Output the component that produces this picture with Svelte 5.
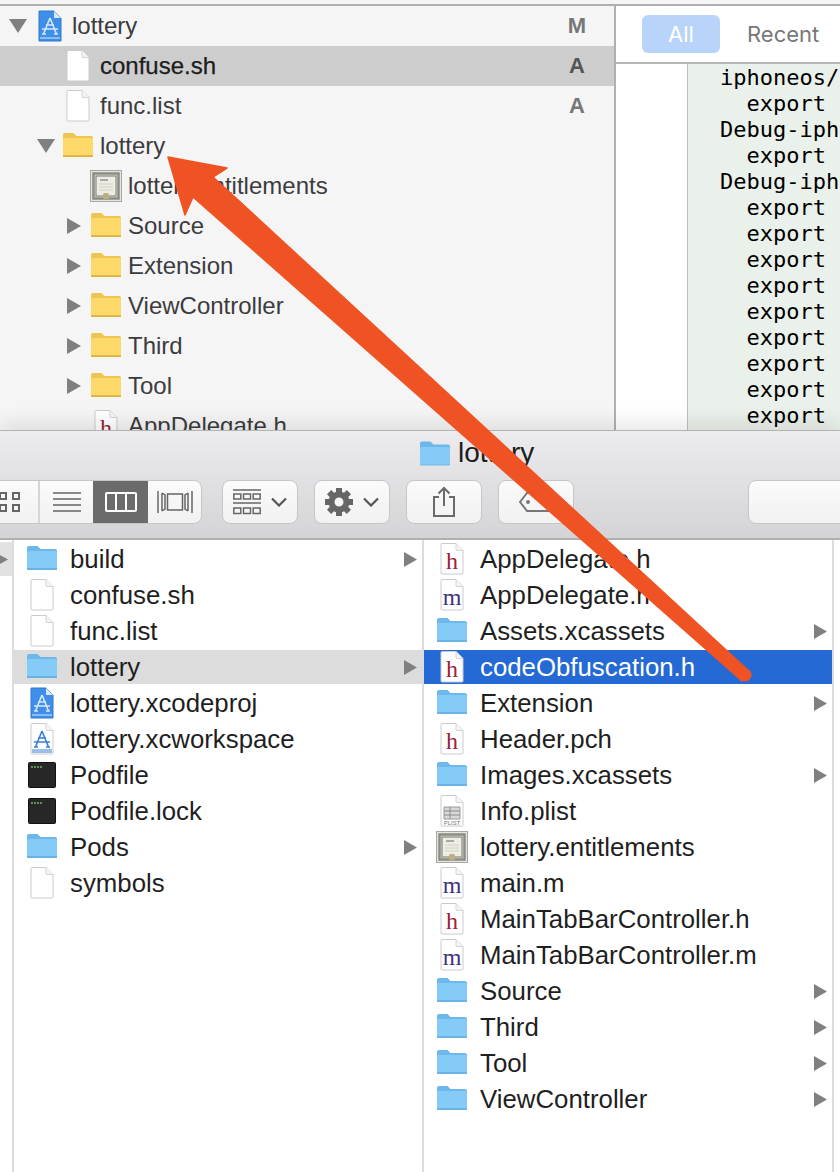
<script>
  const tree = [
    { d: 0, tw: 'down', icon: 'proj', name: 'lottery', st: 'M' },
    { d: 1, icon: 'doc', name: 'confuse.sh', st: 'A', sel: true },
    { d: 1, icon: 'doc', name: 'func.list', st: 'A' },
    { d: 1, tw: 'down', icon: 'yfolder', name: 'lottery' },
    { d: 2, icon: 'cert', name: 'lottery.entitlements' },
    { d: 2, tw: 'right', icon: 'yfolder', name: 'Source' },
    { d: 2, tw: 'right', icon: 'yfolder', name: 'Extension' },
    { d: 2, tw: 'right', icon: 'yfolder', name: 'ViewController' },
    { d: 2, tw: 'right', icon: 'yfolder', name: 'Third' },
    { d: 2, tw: 'right', icon: 'yfolder', name: 'Tool' },
    { d: 2, icon: 'h', name: 'AppDelegate.h' }
  ];
  const code = ['iphoneos/', '  export', 'Debug-iph', '  export', 'Debug-iph', '  export', '  export', '  export', '  export', '  export', '  export', '  export', '  export', '  export'];
  const col1 = [
    { icon: 'folder', name: 'build', more: true },
    { icon: 'doc', name: 'confuse.sh' },
    { icon: 'doc', name: 'func.list' },
    { icon: 'folder', name: 'lottery', more: true, sel: 'grey' },
    { icon: 'proj', name: 'lottery.xcodeproj' },
    { icon: 'work', name: 'lottery.xcworkspace' },
    { icon: 'term', name: 'Podfile' },
    { icon: 'term', name: 'Podfile.lock' },
    { icon: 'folder', name: 'Pods', more: true },
    { icon: 'doc', name: 'symbols' }
  ];
  const col2 = [
    { icon: 'h', name: 'AppDelegate.h' },
    { icon: 'm', name: 'AppDelegate.m' },
    { icon: 'folder', name: 'Assets.xcassets', more: true },
    { icon: 'h', name: 'codeObfuscation.h', sel: 'blue' },
    { icon: 'folder', name: 'Extension', more: true },
    { icon: 'h', name: 'Header.pch' },
    { icon: 'folder', name: 'Images.xcassets', more: true },
    { icon: 'plist', name: 'Info.plist' },
    { icon: 'cert', name: 'lottery.entitlements' },
    { icon: 'm', name: 'main.m' },
    { icon: 'h', name: 'MainTabBarController.h' },
    { icon: 'm', name: 'MainTabBarController.m' },
    { icon: 'folder', name: 'Source', more: true },
    { icon: 'folder', name: 'Third', more: true },
    { icon: 'folder', name: 'Tool', more: true },
    { icon: 'folder', name: 'ViewController', more: true }
  ];
  const teeth = [0, 45, 90, 135, 180, 225, 270, 315];
</script>

{#snippet docBase(fill = '#fff')}
  <path d="M6 1.500h14l7 7V31a1 1 0 0 1-1 1H6a1 1 0 0 1-1-1V2.500a1 1 0 0 1 1-1z" fill={fill} stroke="#cbcbcb" stroke-width="1" />
  <path d="M20 1.500v6a1 1 0 0 0 1 1h6" fill="#f4f4f4" stroke="#d4d4d4" stroke-width="1" />
{/snippet}

{#snippet xA(color)}
  <path d="M16 9 9.500 25M16 9l6.500 16M8 20h16M12 16h8" fill="none" stroke={color} stroke-width="1.600" />
  <path d="M8 25h4M20 25h4" stroke={color} stroke-width="1.600" />
{/snippet}

{#snippet icon(kind)}
  <svg class="ic" viewBox="0 0 32 34" width="32" height="34" aria-hidden="true">
    {#if kind === 'folder' || kind === 'yfolder'}
      {@const y = kind === 'yfolder'}
      <g transform="translate(0 -1.500)">
        <path d="M1 8V7.500A2 2 0 0 1 3 5.500h8.500l3 3H29a2 2 0 0 1 2 2V28a1.500 1.500 0 0 1-1.500 1.500h-27A1.500 1.500 0 0 1 1 28z" fill={y ? '#eec552' : '#6cb8ec'} />
        <path d="M1 12A1.500 1.500 0 0 1 2.500 10.500h27A1.500 1.500 0 0 1 31 12V27a1.500 1.500 0 0 1-1.500 1.500h-27A1.500 1.500 0 0 1 1 27z" fill={y ? '#fcd968' : '#85cbf8'} />
        <path d="M1 28.500h30" stroke={y ? '#dcae3a' : '#62ace2'} stroke-width="1.500" />
      </g>
    {:else if kind === 'doc'}
      {@render docBase()}
    {:else if kind === 'h' || kind === 'm'}
      {@render docBase()}
      <text x="16" y="27" text-anchor="middle" class={kind === 'h' ? 'glyph-h' : 'glyph-m'}>{kind}</text>
    {:else if kind === 'proj'}
      <path d="M5 2h15l7 7v23H5z" fill="#3f8fe8" stroke="#2f78cf" stroke-width="1" />
      <path d="M20 2v7h7z" fill="#d8e8fa" />
      {@render xA('#d5e7fb')}
      <path d="M6 29h20" stroke="#d5e7fb" stroke-width="1" />
    {:else if kind === 'work'}
      {@render docBase()}
      {@render xA('#3a7fd0')}
      <path d="M6 28h20M6 30h20" stroke="#3a7fd0" stroke-width="1" />
    {:else if kind === 'term'}
      <rect x="2.500" y="4.500" width="27" height="25" rx="1" fill="#272727" stroke="#111" stroke-width="1" />
      <path d="M5 9h2M8 9h2M11 9h2M14 9h2" stroke="#6fb46a" stroke-width="1.500" />
    {:else if kind === 'plist'}
      {@render docBase()}
      <path d="M8 13h16v12H8z" fill="#d8d8d8" stroke="#9a9a9a" stroke-width="1" />
      <path d="M8 17h16M8 21h16M14 13v12" stroke="#8a8a8a" stroke-width="1" />
      <text x="16" y="31" text-anchor="middle" class="glyph-p">PLIST</text>
    {:else if kind === 'cert'}
      <rect x="0.500" y="1.500" width="31" height="31" fill="#e6e5dc" stroke="#a8a8a8" />
      <rect x="3.500" y="4.500" width="25" height="25" fill="none" stroke="#8c8c86" stroke-width="2.500" />
      <rect x="6" y="7" width="20" height="20" fill="#eeede4" stroke="#77776f" stroke-width="1" />
      <path d="M10 11h8" stroke="#666" stroke-width="1" />
      <path d="M9 15h14M9 18h14M9 21h14" stroke="#cfcec4" stroke-width="1" />
      <rect x="13" y="24" width="6" height="6" rx="1.500" fill="#bcae86" />
    {/if}
  </svg>
{/snippet}

{#snippet column(rows)}
  {#each rows as r}
    <div class="crow {r.sel ?? ''}">
      {@render icon(r.icon)}
      <span class="cname">{r.name}</span>
      {#if r.more}
        <svg class="more" viewBox="0 0 13 15" width="13" height="15" aria-hidden="true"><path d="M0 0l13 7.500L0 15z" /></svg>
      {/if}
    </div>
  {/each}
{/snippet}

<div class="page">
  <section class="top">
    <div class="sidebar">
      {#each tree as t}
        <div class="trow" class:tsel={t.sel} style="padding-left: {6 + 28 * t.d}px">
          <span class="twisty">
            {#if t.tw === 'down'}
              <svg viewBox="0 0 18 14" width="18" height="14" aria-hidden="true"><path d="M0 0h18L9 14z" /></svg>
            {:else if t.tw === 'right'}
              <svg viewBox="0 0 14 16" width="14" height="16" aria-hidden="true"><path d="M0 0l14 8L0 16z" /></svg>
            {/if}
          </span>
          {@render icon(t.icon)}
          <span class="tname">{t.name}</span>
          {#if t.st}<span class="status">{t.st}</span>{/if}
        </div>
      {/each}
    </div>
    <div class="detail">
      <div class="tabs">
        <span class="tab on">All</span>
        <span class="tab">Recent</span>
      </div>
      <div class="codewrap">
        <div class="gutter"></div>
        <pre class="code">{code.join('\n')}</pre>
      </div>
    </div>
  </section>

  <section class="finder">
    <header class="chrome">
      <div class="title">
        <svg class="ic" viewBox="0 0 32 34" width="32" height="34" aria-hidden="true">
          <path d="M1 8V7.500A2 2 0 0 1 3 5.500h8.500l3 3H29a2 2 0 0 1 2 2V28a1.500 1.500 0 0 1-1.500 1.500h-27A1.500 1.500 0 0 1 1 28z" fill="#6cb8ec" />
          <path d="M1 12.500A1.500 1.500 0 0 1 2.500 11h27a1.500 1.500 0 0 1 1.500 1.500V27a1.500 1.500 0 0 1-1.500 1.500h-27A1.500 1.500 0 0 1 1 27z" fill="#85cbf8" />
        </svg>
        <span>lottery</span>
      </div>
      <div class="toolbar">
        <div class="seg">
          <div class="sb grid">
            <svg viewBox="0 0 20 20" width="20" height="20" fill="none" stroke="#666" stroke-width="2" aria-hidden="true">
              <rect x="0" y="1" width="6" height="6" /><rect x="13" y="1" width="6" height="6" />
              <rect x="0" y="13" width="6" height="6" /><rect x="13" y="13" width="6" height="6" />
            </svg>
          </div>
          <div class="sb list">
            <svg viewBox="0 0 28 20" width="28" height="20" stroke="#666" stroke-width="1.500" aria-hidden="true"><path d="M0 1h28M0 7h28M0 13h28M0 19h28" /></svg>
          </div>
          <div class="sb cols">
            <svg viewBox="0 0 32 20" width="32" height="20" fill="none" stroke="#fff" stroke-width="2" aria-hidden="true"><rect x="1" y="1" width="30" height="18" rx="1" /><path d="M11 1v18M21 1v18" /></svg>
          </div>
          <div class="sb flow">
            <svg viewBox="0 0 36 24" width="36" height="24" fill="none" stroke="#666" stroke-width="1.500" aria-hidden="true"><rect x="10.500" y="4" width="15" height="16" /><path d="M1 1v22M5 3v18M31 3v18M35 1v22M5 3l3 2v14l-3 2M31 3l-3 2v14l3 2" /></svg>
          </div>
        </div>
        <div class="btn arrange">
          <svg viewBox="0 0 28 26" width="28" height="26" fill="none" stroke="#666" stroke-width="1.500" aria-hidden="true">
            <path d="M0 1h28M0 14h28" />
            <rect x="0.800" y="5" width="7" height="5" /><rect x="10.500" y="5" width="7" height="5" /><rect x="20.200" y="5" width="7" height="5" />
            <rect x="0.800" y="19" width="7" height="5.500" /><rect x="10.500" y="19" width="7" height="5.500" /><rect x="20.200" y="19" width="7" height="5.500" />
          </svg>
          <svg class="chev" viewBox="0 0 16 10" width="16" height="10" fill="none" stroke="#555" stroke-width="2.200" aria-hidden="true"><path d="M1 1.500l7 7 7-7" /></svg>
        </div>
        <div class="btn action">
          <svg viewBox="0 0 28 28" width="28" height="28" aria-hidden="true">
            {#each teeth as a}
              <rect x="11" y="0" width="6" height="7" fill="#666" transform="rotate({a} 14 14)" />
            {/each}
            <circle cx="14" cy="14" r="7.500" fill="none" stroke="#666" stroke-width="6" />
          </svg>
          <svg class="chev" viewBox="0 0 16 10" width="16" height="10" fill="none" stroke="#555" stroke-width="2.200" aria-hidden="true"><path d="M1 1.500l7 7 7-7" /></svg>
        </div>
        <div class="btn share">
          <svg viewBox="0 0 24 32" width="24" height="32" fill="none" stroke="#6a6a6a" stroke-width="2" aria-hidden="true">
            <path d="M7 11H2v19h20V11h-5M12 20V2M6.500 7.500 12 2l5.500 5.500" />
          </svg>
        </div>
        <div class="btn tag">
          <svg viewBox="0 0 34 20" width="34" height="20" fill="none" stroke="#777" stroke-width="2" aria-hidden="true">
            <path d="M8 1h25v18H8L1 10z" /><circle cx="9" cy="10" r="1" fill="#777" />
          </svg>
        </div>
        <div class="btn search"></div>
      </div>
    </header>
    <div class="columns">
      <div class="strip">
        <div class="stripsel">
          <svg viewBox="0 0 8 15" width="8" height="15" aria-hidden="true"><path d="M-5 0 8 7.500-5 15z" fill="#808080" /></svg>
        </div>
      </div>
      <div class="col">{@render column(col1)}</div>
      <div class="col">{@render column(col2)}</div>
      <div class="rest"></div>
    </div>
  </section>

  <svg class="arrow" viewBox="0 0 840 1172" width="840" height="1172" aria-hidden="true">
    <path d="M168 157 227 168 213 177 750 672 742 681 193 197 185 215Z" fill="#f05323" stroke="#f05323" stroke-width="1.500" stroke-linejoin="round" />
    <circle cx="745" cy="675" r="6.500" fill="#f05323" />
  </svg>
</div>

<style>
  :global(body) {
    margin: 0;
    background: #fff;
  }
  .page {
    position: relative;
    width: 840px;
    height: 1172px;
    overflow: hidden;
    font-family: "Liberation Sans", Arial, sans-serif;
  }
  .top {
    display: flex;
    height: 430px;
    overflow: hidden;
    box-sizing: border-box;
    padding-top: 4px;
    background: #f5f5f5;
  }
  .sidebar {
    width: 614px;
    flex: none;
    border-top: 2px solid #b0b0b0;
    border-right: 2px solid #b0b0b0;
    background: #f5f5f5;
  }
  .trow {
    display: flex;
    align-items: center;
    height: 40px;
    box-sizing: border-box;
    font-size: 24px;
    color: #3c3c40;
  }
  .tsel {
    background: #cdcdcd;
    color: #1c1c1c;
  }
  .tsel .tname {
    -webkit-text-stroke: 0.25px #1c1c1c;
  }
  .twisty {
    flex: none;
    display: flex;
    justify-content: center;
    width: 24px;
    margin-right: 4px;
    fill: #808080;
  }
  .ic {
    flex: none;
    display: block;
  }
  .tname {
    margin-left: 6px;
    white-space: nowrap;
  }
  .status {
    width: 24px;
    margin-left: auto;
    margin-right: 25px;
    text-align: center;
    font-size: 22px;
    font-weight: 700;
    color: #777;
  }
  .tsel .status {
    color: #555;
  }
  .detail {
    flex: 1;
    min-width: 0;
    display: flex;
    flex-direction: column;
    border-top: 2px solid #b0b0b0;
    background: #fff;
  }
  .tabs {
    display: flex;
    flex: none;
    align-items: center;
    gap: 27px;
    height: 58px;
    box-sizing: border-box;
    padding-left: 26px;
    border-bottom: 2px solid #b8b8b8;
    font-family: "Inter", "Liberation Sans", sans-serif;
    font-size: 22px;
    color: #777;
  }
  .tab.on {
    width: 78px;
    height: 38px;
    line-height: 38px;
    text-align: center;
    border-radius: 6px;
    background: #b8d4fa;
    color: #fff;
  }
  .codewrap {
    flex: 1;
    display: flex;
    min-height: 0;
    overflow: hidden;
  }
  .gutter {
    flex: none;
    width: 71px;
    background: #fff;
  }
  .code {
    flex: 1;
    margin: 0;
    padding: 1px 0 0 32px;
    border-left: 1px solid #b5c5b5;
    background: #eaf0ea;
    font-family: "DejaVu Sans Mono", monospace;
    font-size: 22px;
    line-height: 26px;
    color: #000;
    overflow: hidden;
  }
  .finder {
    position: relative;
    height: 742px;
    background: #fff;
    box-shadow: 0 -8px 18px rgba(0, 0, 0, 0.09);
    display: flex;
    flex-direction: column;
  }
  .chrome {
    flex: none;
    height: 110px;
    box-sizing: border-box;
    border-top: 1px solid #b4b4b4;
    border-bottom: 2px solid #b0b0b0;
    background: linear-gradient(#ececee, #d4d4d6);
  }
  .title {
    display: flex;
    align-items: center;
    gap: 7px;
    height: 44px;
    padding-left: 419px;
    font-size: 28px;
    color: #1c1c1c;
  }
  .toolbar {
    display: flex;
    gap: 16px;
    margin-top: 5px;
    height: 44px;
  }
  .seg {
    display: flex;
    flex: none;
    margin-left: -30px;
    margin-right: 4px;
    height: 44px;
    box-sizing: border-box;
    border-radius: 8px;
    overflow: hidden;
    border: 1px solid #c6c6c6;
    background: linear-gradient(#fbfbfb, #f1f1f1);
  }
  .sb {
    display: flex;
    align-items: center;
    justify-content: center;
    box-sizing: border-box;
    height: 100%;
  }
  .grid {
    width: 69px;
    padding-left: 29px;
    justify-content: flex-start;
    border-right: 2px solid #d6d6d6;
  }
  .list {
    width: 53px;
  }
  .cols {
    width: 55px;
    background: #6b6b6b;
  }
  .flow {
    width: 53px;
  }
  .btn {
    display: flex;
    flex: none;
    align-items: center;
    justify-content: center;
    height: 44px;
    width: 76px;
    box-sizing: border-box;
    border: 1px solid #c6c6c6;
    border-radius: 8px;
    background: linear-gradient(#fbfbfb, #f1f1f1);
  }
  .arrange,
  .action {
    gap: 10px;
  }
  .search {
    width: 132px;
    margin-left: auto;
    margin-right: -40px;
  }
  .columns {
    flex: 1;
    display: flex;
    min-height: 0;
  }
  .strip {
    flex: none;
    width: 12px;
    padding-top: 2px;
    border-right: 2px solid #dcdcdc;
  }
  .stripsel {
    height: 34px;
    background: #e2e2e2;
    display: flex;
    align-items: center;
  }
  .col {
    flex: none;
    width: 408px;
    padding-top: 2px;
    border-right: 2px solid #dcdcdc;
  }
  .rest {
    flex: 1;
  }
  .crow {
    display: flex;
    align-items: center;
    height: 34px;
    margin-bottom: 2px;
    padding-left: 12px;
    font-size: 25.8px;
    color: #1f1f1f;
  }
  .cname {
    margin-left: 12px;
    white-space: nowrap;
  }
  .more {
    margin-left: auto;
    margin-right: 5px;
    fill: #808080;
  }
  .grey {
    background: #dcdcdc;
  }
  .blue {
    background: #2469d4;
    color: #fff;
  }
  .glyph-h,
  .glyph-m {
    font-family: "Liberation Serif", serif;
    font-size: 24px;
  }
  .glyph-h {
    fill: #9b2335;
  }
  .glyph-m {
    fill: #43307f;
  }
  .glyph-p {
    font-family: "Liberation Sans", sans-serif;
    font-size: 6px;
    fill: #777;
  }
  .arrow {
    position: absolute;
    left: 0;
    top: 0;
    pointer-events: none;
  }
</style>
